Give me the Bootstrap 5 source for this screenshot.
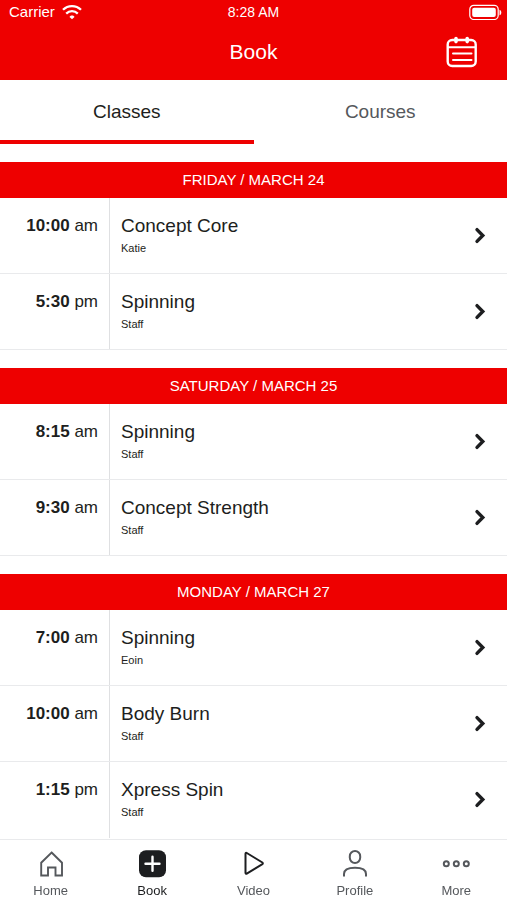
<!DOCTYPE html>
<html lang="en">
<head>
<meta charset="utf-8">
<meta name="viewport" content="width=device-width, initial-scale=1">
<title>Book</title>
<link href="https://cdn.jsdelivr.net/npm/bootstrap@5.3.0/dist/css/bootstrap.min.css" rel="stylesheet">
<style>
  :root { --brand: #ee0000; --ink: #1d1e20; --muted-ink: #55585c; --rule: #e9eaec; }
  body { font-family: "Liberation Sans", Arial, sans-serif; color: var(--ink); background: #fff; }
  svg { display: block; flex: none; }
  .app-head { background: var(--brand); color: #fff; }
  .three-col { display: grid; grid-template-columns: 1fr auto 1fr; align-items: center; }
  .status-line { height: 24px; padding: 0 5px; font-size: 14px; line-height: 24px; }
  .carrier { font-size: 15px; gap: 7px; padding-left: 4px; }
  .title-line { height: 56px; padding: 0 29px; }
  .title-line h1 { font-size: 21px; line-height: 56px; }
  .view-tab { height: 64px; border: 0; border-bottom: 4px solid transparent; background: none; color: var(--muted-ink); font-size: 19px; line-height: 24px; padding: 4px 0 0; }
  .view-tab.active { color: var(--ink); border-bottom-color: var(--brand); }
  .day { margin-top: 18px; }
  .day h2 { background: var(--brand); color: #fff; font-size: 15px; line-height: 36px; }
  .slot { height: 76px; color: var(--ink); border-bottom: 1px solid var(--rule); }
  .slot-time { width: 110px; padding: 16px 11px 0 0; border-right: 1px solid #dfe0e2; font-size: 17px; line-height: 24px; }
  .slot-info { padding: 16px 0 0 11px; }
  .slot-name { font-size: 19px; line-height: 24px; }
  .slot-staff { font-size: 11px; line-height: 20px; }
  .slot-arrow { margin-right: 20px; }
  .tab-bar { background: #fff; border-top: 1px solid var(--rule); height: 61px; }
  .tab-bar a { color: var(--muted-ink); font-size: 13px; line-height: 20px; padding-top: 9px; gap: 2px; }
  .tab-bar a.active { color: var(--ink); }
</style>
</head>
<body class="d-flex flex-column min-vh-100">
<svg class="d-none" aria-hidden="true">
  <symbol id="chevron" viewBox="0 0 14 18"><path d="M4 2.600 9.800 8.500l-5.800 5.900" fill="none" stroke="#1d1e20" stroke-width="3.400" stroke-linecap="round" stroke-linejoin="miter"/></symbol>
</svg>

<header class="app-head">
  <div class="status-line three-col">
    <span class="carrier d-flex align-items-center">Carrier
      <svg width="20" height="16" viewBox="0 0 20 16" fill="none" stroke="#fff" stroke-width="2.300" aria-label="Wi-Fi"><path d="M1 5.800C6 .9 14 .9 19 5.800M4.200 9.600c3.300-3.200 8.300-3.200 11.600 0"/><path d="M10 15.200 7.500 12.900c1.200-1.800 3.800-1.800 5 0z" fill="#fff" stroke="none"/></svg>
    </span>
    <span>8:28 AM</span>
    <svg class="ms-auto" width="33" height="16" viewBox="0 0 33 16" aria-label="Battery full"><rect x=".8" y="1.300" width="28.400" height="14.200" rx="4" fill="none" stroke="#fff" stroke-width="1.200"/><rect x="3.200" y="3.700" width="23.600" height="9.400" rx="2" fill="#fff"/><path d="M30.500 5.700c2.400.6 2.400 5 0 5.600z" fill="#fff"/></svg>
  </div>
  <div class="title-line three-col">
    <span></span>
    <h1 class="m-0 fw-normal">Book</h1>
    <button type="button" class="btn p-0 border-0 ms-auto" aria-label="Calendar">
      <svg width="32" height="32" viewBox="0 0 32 32" fill="none" stroke="#fff" stroke-width="2.400" stroke-linecap="round"><rect x="1.700" y="4" width="28" height="26" rx="4.500"/><path d="M2.500 11.300H29" stroke-width="2"/><path d="M7 17.500h18.500M7 24h18.500" stroke-width="2"/><path d="M10 2.600v3M21.200 2.600v3" stroke-width="3.600"/></svg>
    </button>
  </div>
</header>

<div class="d-flex" role="tablist">
  <button type="button" role="tab" aria-selected="true" class="view-tab active w-50">Classes</button>
  <button type="button" role="tab" aria-selected="false" class="view-tab w-50">Courses</button>
</div>

<main class="flex-grow-1">
  <section class="day">
    <h2 class="m-0 fw-normal text-center">FRIDAY / MARCH 24</h2>
    <a href="#" class="slot d-flex text-decoration-none">
      <div class="slot-time text-end"><b>10:00</b> am</div>
      <div class="slot-info flex-grow-1"><div class="slot-name">Concept Core</div><div class="slot-staff">Katie</div></div>
      <svg class="slot-arrow align-self-center" width="14" height="18"><use href="#chevron"/></svg>
    </a>
    <a href="#" class="slot d-flex text-decoration-none">
      <div class="slot-time text-end"><b>5:30</b> pm</div>
      <div class="slot-info flex-grow-1"><div class="slot-name">Spinning</div><div class="slot-staff">Staff</div></div>
      <svg class="slot-arrow align-self-center" width="14" height="18"><use href="#chevron"/></svg>
    </a>
  </section>
  <section class="day">
    <h2 class="m-0 fw-normal text-center">SATURDAY / MARCH 25</h2>
    <a href="#" class="slot d-flex text-decoration-none">
      <div class="slot-time text-end"><b>8:15</b> am</div>
      <div class="slot-info flex-grow-1"><div class="slot-name">Spinning</div><div class="slot-staff">Staff</div></div>
      <svg class="slot-arrow align-self-center" width="14" height="18"><use href="#chevron"/></svg>
    </a>
    <a href="#" class="slot d-flex text-decoration-none">
      <div class="slot-time text-end"><b>9:30</b> am</div>
      <div class="slot-info flex-grow-1"><div class="slot-name">Concept Strength</div><div class="slot-staff">Staff</div></div>
      <svg class="slot-arrow align-self-center" width="14" height="18"><use href="#chevron"/></svg>
    </a>
  </section>
  <section class="day">
    <h2 class="m-0 fw-normal text-center">MONDAY / MARCH 27</h2>
    <a href="#" class="slot d-flex text-decoration-none">
      <div class="slot-time text-end"><b>7:00</b> am</div>
      <div class="slot-info flex-grow-1"><div class="slot-name">Spinning</div><div class="slot-staff">Eoin</div></div>
      <svg class="slot-arrow align-self-center" width="14" height="18"><use href="#chevron"/></svg>
    </a>
    <a href="#" class="slot d-flex text-decoration-none">
      <div class="slot-time text-end"><b>10:00</b> am</div>
      <div class="slot-info flex-grow-1"><div class="slot-name">Body Burn</div><div class="slot-staff">Staff</div></div>
      <svg class="slot-arrow align-self-center" width="14" height="18"><use href="#chevron"/></svg>
    </a>
    <a href="#" class="slot d-flex text-decoration-none border-bottom-0">
      <div class="slot-time text-end"><b>1:15</b> pm</div>
      <div class="slot-info flex-grow-1"><div class="slot-name">Xpress Spin</div><div class="slot-staff">Staff</div></div>
      <svg class="slot-arrow align-self-center" width="14" height="18"><use href="#chevron"/></svg>
    </a>
  </section>
</main>

<nav class="tab-bar sticky-bottom row row-cols-5 g-0">
  <a href="#" class="d-flex flex-column align-items-center text-decoration-none">
    <svg width="30" height="30" viewBox="0 0 30 30" fill="none" stroke="#55585c" stroke-width="1.900" stroke-linejoin="miter"><path d="M15.600 3.500 26 13.700V26.500H19.500V18.500H12v8H5.200V13.700z"/></svg>
    Home</a>
  <a href="#" class="active d-flex flex-column align-items-center text-decoration-none" aria-current="page">
    <svg width="30" height="30" viewBox="0 0 30 30"><rect x="2" y="1.200" width="27" height="27" rx="7" fill="#1d1e20"/><path d="M15.500 7.700v14M8.500 14.700h14" stroke="#fff" stroke-width="2.400" stroke-linecap="round"/></svg>
    Book</a>
  <a href="#" class="d-flex flex-column align-items-center text-decoration-none">
    <svg width="30" height="30" viewBox="0 0 30 30" fill="none" stroke="#1d1e20" stroke-width="2" stroke-linejoin="round"><path d="M7.500 4.800v19c0 .8.600 1.200 1.300.8l15.600-9.500c.6-.4.600-1.200 0-1.600L8.800 4C8.100 3.600 7.500 4 7.500 4.800z"/></svg>
    Video</a>
  <a href="#" class="d-flex flex-column align-items-center text-decoration-none">
    <svg width="30" height="30" viewBox="0 0 30 30" fill="none" stroke="#55585c" stroke-width="2"><rect x="9.800" y="2" width="10.400" height="12" rx="5.200"/><path d="M4 27.500V25c0-4.200 4.600-6.200 11-6.200s11 2 11 6.200v2.500"/></svg>
    Profile</a>
  <a href="#" class="d-flex flex-column align-items-center text-decoration-none">
    <svg width="30" height="30" viewBox="0 0 30 30" fill="none" stroke="#55585c" stroke-width="2"><circle cx="5.300" cy="14.700" r="2.500"/><circle cx="15.300" cy="14.700" r="2.500"/><circle cx="25.300" cy="14.700" r="2.500"/></svg>
    More</a>
</nav>
<script src="https://cdn.jsdelivr.net/npm/bootstrap@5.3.0/dist/js/bootstrap.bundle.min.js"></script>
</body>
</html>
